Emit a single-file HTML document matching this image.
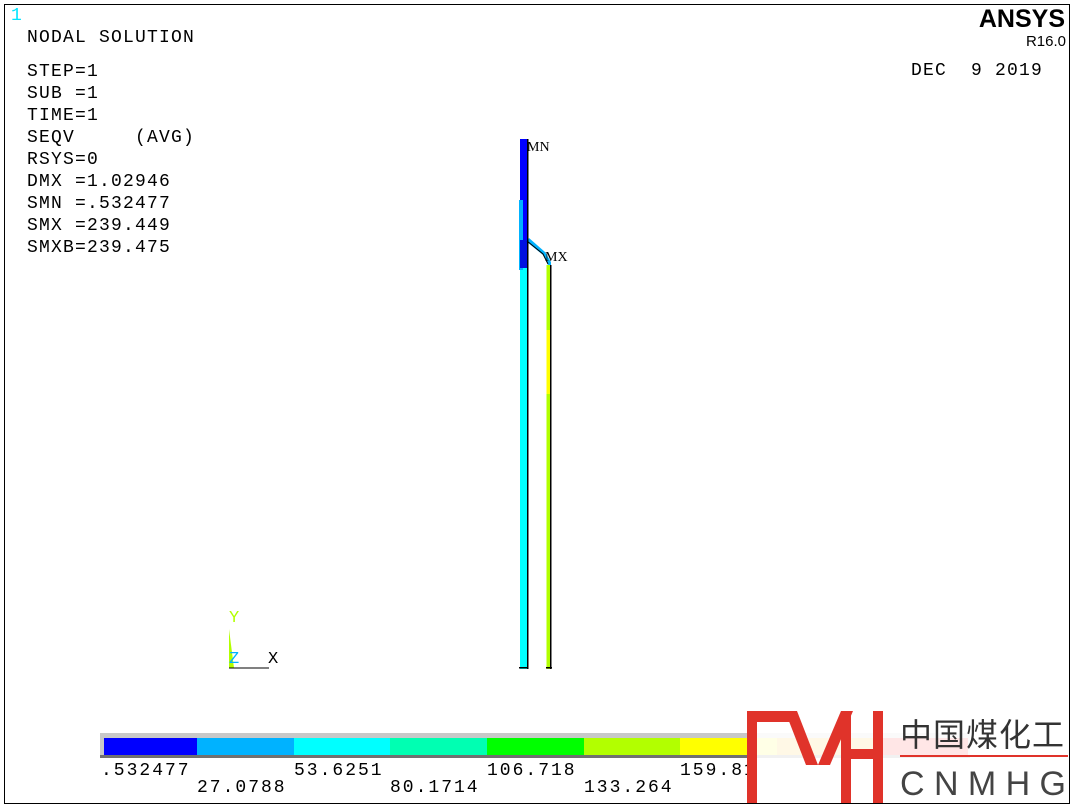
<!DOCTYPE html>
<html><head><meta charset="utf-8"><style>
body{margin:0;width:1074px;height:810px;background:#fff;position:relative;overflow:hidden;font-family:"Liberation Mono",monospace;}
.t{position:absolute;font-size:18px;color:#000;white-space:pre;line-height:20px;font-family:"Liberation Mono","Courier New",monospace;}
.b{position:absolute;}
</style></head><body>
<div class="b" style="left:4px;top:4px;width:1064px;height:798px;border:1px solid #000;"></div>
<div class="t" style="left:11px;top:6px;color:#00e5ff;">1</div>
<div class="t" style="left:27px;top:28px;letter-spacing:1.2px">NODAL SOLUTION</div>
<div class="t" style="left:27px;top:61px;letter-spacing:1.2px;line-height:22px">STEP=1
SUB =1
TIME=1
SEQV     (AVG)
RSYS=0
DMX =1.02946
SMN =.532477
SMX =239.449
SMXB=239.475</div>
<div class="t" style="left:911px;top:61px;letter-spacing:1.2px">DEC  9 2019</div>
<div class="b" style="right:9px;top:5px;font:bold 25px 'Liberation Sans',sans-serif;">ANSYS</div>
<div class="b" style="right:8px;top:33px;font:15px 'Liberation Sans',sans-serif;">R16.0</div>

<svg class="b" style="left:0;top:0" width="1074" height="810">
<rect x="520" y="139" width="7" height="530" fill="#00ffff"/>
<rect x="520" y="139" width="7" height="110" fill="#0000ff"/>
<rect x="519" y="200" width="4" height="70" fill="#00b2ff"/>
<rect x="520" y="240" width="7" height="28" fill="#0010e0"/>
<path d="M527 242 L543 255 L548 265 L551 265 L551 262 L545 252 L529 238Z" fill="#00b2ff"/>
<path d="M527 241 L543 254 L548 264" stroke="#000" fill="none" stroke-width="1"/>
<rect x="546.5" y="265" width="4" height="404" fill="#b2ff00"/>
<rect x="546.5" y="330" width="4" height="64" fill="#ffff00"/>
<rect x="527" y="139" width="1.5" height="530" fill="#000"/>
<rect x="550" y="265" width="1.5" height="404" fill="#000"/>
<rect x="519" y="667" width="9" height="1.5" fill="#000"/>
<rect x="546" y="667" width="6" height="1.5" fill="#000"/>
<text x="527" y="151" font-family="Liberation Serif,serif" font-size="14">MN</text>
<text x="545" y="261" font-family="Liberation Serif,serif" font-size="14">MX</text>
<path d="M229 629 L234 668 L229 668Z" fill="#b2ff00"/>
<line x1="229" y1="668" x2="269" y2="668" stroke="#000"/>
<text x="229" y="622" font-family="Liberation Mono,monospace" font-size="17" fill="#b2ff00">Y</text>
<text x="229" y="663" font-family="Liberation Mono,monospace" font-size="17" fill="#00b2ff">Z</text>
<text x="268" y="663" font-family="Liberation Mono,monospace" font-size="17" fill="#000">X</text>
<rect x="100" y="733" width="870" height="25" fill="#c8c8c8"/>
<rect x="100" y="755" width="870" height="3" fill="#707070"/>
<rect x="104" y="738" width="93" height="17" fill="#0000ff"/>
<rect x="197" y="738" width="97" height="17" fill="#00b2ff"/>
<rect x="294" y="738" width="96" height="17" fill="#00ffff"/>
<rect x="390" y="738" width="97" height="17" fill="#00ffb2"/>
<rect x="487" y="738" width="97" height="17" fill="#00ff00"/>
<rect x="584" y="738" width="96" height="17" fill="#b2ff00"/>
<rect x="680" y="738" width="97" height="17" fill="#ffff00"/>
<rect x="777" y="738" width="96" height="17" fill="#ffb200"/>
<rect x="873" y="738" width="95" height="17" fill="#ff0000"/>
<g font-family="Liberation Mono,monospace" font-size="18" fill="#000" letter-spacing="2">
<text x="101" y="775">.532477</text>
<text x="197" y="792">27.0788</text>
<text x="294" y="775">53.6251</text>
<text x="390" y="792">80.1714</text>
<text x="487" y="775">106.718</text>
<text x="584" y="792">133.264</text>
<text x="680" y="775">159.81</text>
</g>
<rect x="747" y="710" width="322" height="92" fill="#fff" fill-opacity="0.9"/>
<g fill="#e0332a">
<rect x="747" y="711" width="10" height="92"/>
<rect x="747" y="711" width="50" height="11"/>
<path d="M785 711 L797 711 L818 765 L806 765Z"/>
<path d="M818 765 L830 765 L853 711 L841 711Z"/>
<rect x="841" y="711" width="10" height="92"/>
<rect x="851" y="749" width="24" height="10"/>
<rect x="873" y="711" width="10" height="92"/>
</g>
<rect x="900" y="755" width="168" height="2" fill="#e0332a"/>
<text x="900" y="746" font-family="Noto Sans CJK SC,sans-serif" font-size="32" fill="#333" letter-spacing="1">中国煤化工</text>
<text x="900" y="795" font-family="Liberation Sans,sans-serif" font-size="34" fill="#444" textLength="166" lengthAdjust="spacing">CNMHG</text>
</svg>
</body></html>
